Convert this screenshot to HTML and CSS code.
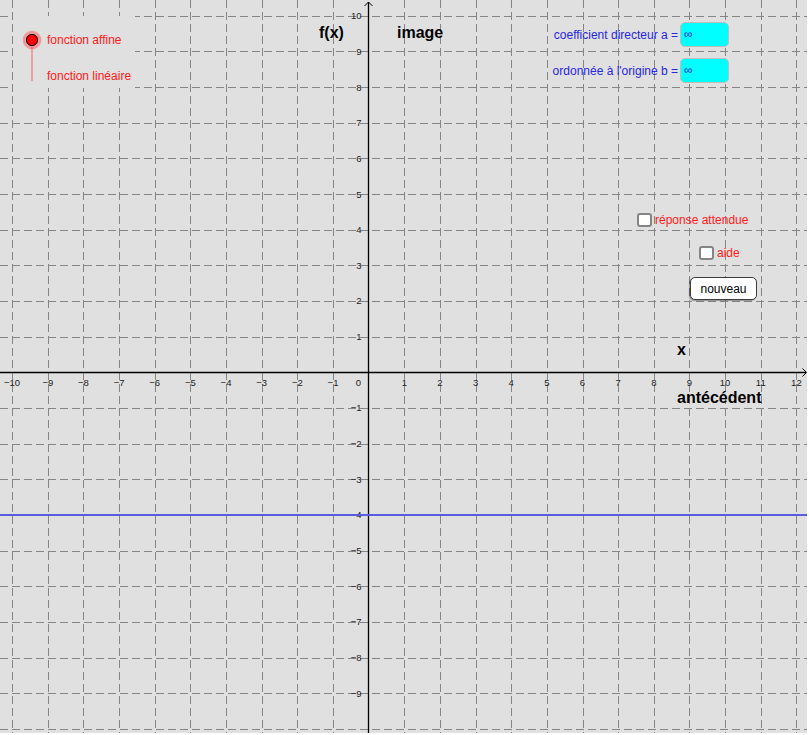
FILE: index.html
```html
<!DOCTYPE html>
<html lang="fr">
<head>
<meta charset="utf-8">
<title>Fonction affine</title>
<link rel="stylesheet" href="styles.css">
</head>
<body>
<div class="applet">
  <svg class="plot" id="plot" width="807" height="733" viewBox="0 0 807 733"></svg>

  <div class="slider-block">
    <svg class="slider" width="20" height="72" viewBox="0 0 20 72">
      <line class="slider-track" x1="10" y1="24" x2="10" y2="65"></line>
      <circle class="slider-halo" cx="10" cy="24" r="9.3"></circle>
      <circle class="slider-point" cx="10" cy="24" r="5.6"></circle>
    </svg>
    <div class="slider-labels">
      <span class="red-label">fonction affine</span>
      <span class="red-label">fonction linéaire</span>
    </div>
  </div>

  <div class="fields">
    <div class="field-row">
      <span class="field-label">coefficient directeur a =</span>
      <span class="field-box">∞</span>
    </div>
    <div class="field-row">
      <span class="field-label">ordonnée à l'origine b =</span>
      <span class="field-box">∞</span>
    </div>
  </div>

  <label class="check check-reponse"><span class="check-box"></span><span class="red-label">réponse attendue</span></label>
  <label class="check check-aide"><span class="check-box"></span><span class="red-label">aide</span></label>

  <button class="btn-nouveau" type="button">nouveau</button>
</div>
<script src="script.js"></script>
</body>
</html>
```

FILE: styles.css
```css
html, body {
  margin: 0;
  padding: 0;
  background: #ffffff;
}

.applet {
  position: relative;
  width: 807px;
  height: 733px;
  background: #e0e0e0;
  overflow: hidden;
  font-family: "Liberation Sans", Arial, sans-serif;
}

.plot {
  position: absolute;
  left: 0;
  top: 0;
  display: block;
}

.grid-line {
  stroke: #858585;
  stroke-width: 1;
  stroke-dasharray: 8 4;
  fill: none;
}

.axis-line {
  stroke: #000000;
  stroke-width: 1.3;
  fill: none;
}

.axis-arrow {
  stroke: #000000;
  stroke-width: 1;
  fill: none;
}

.tick-label {
  font-family: "Liberation Sans", Arial, sans-serif;
  font-size: 9.5px;
  fill: #222222;
}

.big-label {
  font-family: "Liberation Sans", Arial, sans-serif;
  font-size: 16px;
  font-weight: bold;
  fill: #000000;
}

.blue-line {
  stroke: #5c5ce0;
  stroke-width: 2;
  fill: none;
}

/* vertical two-state slider with labels */
.slider-block {
  position: absolute;
  left: 13px;
  top: 16px;
  width: 122px;
  height: 72px;
  background: #e0e0e0;
  display: flex;
  align-items: flex-start;
}

.slider {
  display: block;
  margin-left: 9px;
  flex: none;
}

.slider-track {
  stroke: #f28a8a;
  stroke-width: 1.5;
}

.slider-halo {
  fill: rgba(255, 40, 40, 0.38);
}

.slider-point {
  fill: #ff0000;
  stroke: #000000;
  stroke-width: 1;
}

.slider-labels {
  display: flex;
  flex-direction: column;
  padding-top: 6px;
  padding-left: 5px;
}

.slider-labels .red-label {
  display: block;
  height: 36px;
  line-height: 36px;
  white-space: nowrap;
}

.red-label {
  font-size: 12px;
  color: #ff1a1a;
  white-space: nowrap;
}

/* input fields */
.fields {
  position: absolute;
  right: 78px;
  top: 22px;
  display: flex;
  flex-direction: column;
  align-items: flex-end;
  gap: 11px;
}

.field-row {
  display: flex;
  align-items: center;
  gap: 2px;
}

.field-label {
  font-size: 12px;
  color: #2626e4;
  white-space: nowrap;
}

.field-box {
  box-sizing: border-box;
  width: 49px;
  height: 25px;
  background: #00ffff;
  border: 1px solid #bdbdbd;
  border-radius: 5px;
  padding-left: 3px;
  font-size: 12px;
  line-height: 23px;
  color: #2626e4;
}

/* checkboxes */
.check {
  position: absolute;
  display: flex;
  align-items: center;
  gap: 3px;
}

.check-reponse {
  left: 637px;
  top: 213px;
}

.check-aide {
  left: 699px;
  top: 246px;
}

.check-box {
  box-sizing: border-box;
  width: 15px;
  height: 14px;
  background: #ffffff;
  border: 2px solid #858585;
  border-radius: 3px;
}

/* button */
.btn-nouveau {
  position: absolute;
  left: 690px;
  top: 277px;
  box-sizing: border-box;
  width: 67px;
  height: 23px;
  margin: 0;
  padding: 0;
  background: #ffffff;
  border: 1px solid #3c3c3c;
  border-radius: 5px;
  box-shadow: -1px 1px 1px rgba(0, 0, 0, 0.35);
  font-family: "Liberation Sans", Arial, sans-serif;
  font-size: 12px;
  color: #000000;
}
```

FILE: script.js
```js
(function () {
  var NS = "http://www.w3.org/2000/svg";
  var svg = document.getElementById("plot");
  var ox = 368.6, oy = 372.3, u = 35.65, W = 807, H = 733;

  function el(tag, attrs, text) {
    var e = document.createElementNS(NS, tag);
    for (var k in attrs) e.setAttribute(k, attrs[k]);
    if (text !== undefined) e.textContent = text;
    svg.appendChild(e);
    return e;
  }
  function num(n) { return n < 0 ? "\u2212" + (-n) : String(n); }

  var i, j, x, y;
  // grid
  for (i = -10; i <= 12; i++) {
    if (i === 0) continue;
    x = Math.round(ox + i * u) + 0.5;
    el("line", { "class": "grid-line", x1: x, y1: 0, x2: x, y2: H });
  }
  for (j = -10; j <= 10; j++) {
    if (j === 0) continue;
    y = Math.round(oy - j * u) + 0.5;
    el("line", { "class": "grid-line", x1: 0, y1: y, x2: W, y2: y });
  }

  // axes
  el("line", { "class": "axis-line", x1: 0, y1: 372.5, x2: 806, y2: 372.5 });
  el("line", { "class": "axis-line", x1: 368.5, y1: 2, x2: 368.5, y2: H });
  el("polyline", { "class": "axis-arrow", points: "802.5,368.5 806.5,372.5 802.5,376.5" });
  el("polyline", { "class": "axis-arrow", points: "364.5,6 368.5,2 372.5,6" });

  // tick labels
  for (i = -10; i <= 12; i++) {
    if (i === 0) continue;
    el("text", { "class": "tick-label", x: (ox + i * u).toFixed(1), y: 386, "text-anchor": "middle" }, num(i));
  }
  el("text", { "class": "tick-label", x: 361, y: 386, "text-anchor": "end" }, "0");
  for (j = -9; j <= 10; j++) {
    if (j === 0) continue;
    el("text", { "class": "tick-label", x: 361.5, y: (oy - j * u + 3.4).toFixed(1), "text-anchor": "end" }, num(j));
  }

  // function graph y = -4
  y = oy + 4 * u;
  el("line", { "class": "blue-line", x1: 0, y1: y.toFixed(1), x2: W, y2: y.toFixed(1) });

  // text labels on the canvas
  el("text", { "class": "big-label", x: 319, y: 38 }, "f(x)");
  el("text", { "class": "big-label", x: 397, y: 38 }, "image");
  el("text", { "class": "big-label", x: 677, y: 355 }, "x");
  el("text", { "class": "big-label", x: 677, y: 403 }, "antécédent");
})();
```
